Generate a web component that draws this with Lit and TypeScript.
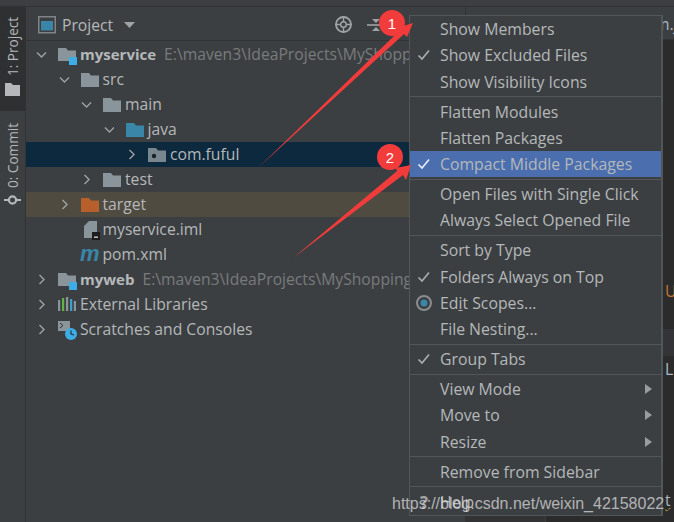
import { LitElement, html, css, svg } from "lit";
import { customElement } from "lit/decorators.js";

const folder = (c: string) => svg`<path d="M0 3h8l2 2.5h8V17H0z" fill="${c}"/>`;
const chev = (open: boolean) =>
  open
    ? html`<svg class="chev" width="12" height="12" viewBox="0 0 12 12"><path d="M1 3.5 5.5 8 10 3.5" fill="none" stroke="#9fa2a4" stroke-width="1.4"/></svg>`
    : html`<svg class="chev" width="12" height="12" viewBox="0 0 12 12"><path d="M3.5 1 8 5.5 3.5 10" fill="none" stroke="#9fa2a4" stroke-width="1.4"/></svg>`;

const moduleIcon = svg`<path d="M0 3h8l2 2.5h8V16H0z" fill="#8a949b"/><rect x="11" y="12" width="8" height="8" fill="#3dade6"/>`;

type Row = { d: number; chev?: "o" | "c"; icon: any; name: string; bold?: boolean; path?: string; cls?: string };
const rows: Row[] = [
  { d: 0, chev: "o", icon: moduleIcon, name: "myservice", bold: true, path: "E:\\maven3\\IdeaProjects\\MyShopping" },
  { d: 1, chev: "o", icon: folder("#8a949b"), name: "src" },
  { d: 2, chev: "o", icon: folder("#8a949b"), name: "main" },
  { d: 3, chev: "o", icon: folder("#3a86a8"), name: "java" },
  { d: 4, chev: "c", icon: svg`${folder("#7a868d")}<circle cx="6" cy="11" r="2.2" fill="#14222e"/>`, name: "com.fuful", cls: "sel" },
  { d: 2, chev: "c", icon: folder("#8a949b"), name: "test" },
  { d: 1, chev: "c", icon: folder("#b8602c"), name: "target", cls: "excl" },
  { d: 1, icon: svg`<path d="M8 1h8v17H3V6z" fill="#8a949b"/><rect x="11" y="12" width="8" height="8" fill="#1c1c1c"/><rect x="13" y="16.5" width="4" height="1.3" fill="#ddd"/>`, name: "myservice.iml" },
  { d: 1, icon: svg`<text x="-1" y="16" font-family="Liberation Sans" font-size="22" font-weight="700" font-style="italic" fill="#3a86a8">m</text>`, name: "pom.xml" },
  { d: 0, chev: "c", icon: moduleIcon, name: "myweb", bold: true, path: "E:\\maven3\\IdeaProjects\\MyShopping" },
  { d: 0, chev: "c", icon: svg`<rect x="0" y="5" width="2.2" height="11" fill="#8a949b"/><rect x="4" y="3" width="2.2" height="13" fill="#62b543"/><rect x="8" y="2" width="2.2" height="14" fill="#8a949b"/><rect x="12" y="4" width="2.2" height="12" fill="#3d9fd0"/><rect x="15.8" y="6" width="2.2" height="10" fill="#8a949b"/>`, name: "External Libraries" },
  { d: 0, chev: "c", icon: svg`<path d="M0 1h12v10H0z" fill="#8a949b"/><path d="M2 3l3 2.5L2 8" fill="none" stroke="#333" stroke-width="1"/><circle cx="13" cy="14" r="6" fill="#3dade6"/><path d="M13 10.5V14l3 1" fill="none" stroke="#24333c" stroke-width="1.2"/>`, name: "Scratches and Consoles" },
];

type Item = { t: string; check?: boolean; radio?: boolean; help?: boolean; arrow?: boolean; active?: boolean; h: number; u?: [string, string, string] };
const groups: Item[][] = [
  [{ t: "Show Members", h: 26 }, { t: "Show Excluded Files", check: true, h: 27 }, { t: "Show Visibility Icons", h: 26 }],
  [{ t: "Flatten Modules", h: 26 }, { t: "Flatten Packages", h: 26 }, { t: "Compact Middle Packages", check: true, active: true, h: 26 }],
  [{ t: "Open Files with Single Click", h: 26 }, { t: "Always Select Opened File", h: 26 }],
  [{ t: "Sort by Type", h: 27 }, { t: "Folders Always on Top", check: true, h: 26 }, { t: "Edit Scopes...", radio: true, h: 26, u: ["Ed", "i", "t Scopes..."] }, { t: "File Nesting...", h: 26 }],
  [{ t: "Group Tabs", check: true, h: 26 }],
  [{ t: "View Mode", arrow: true, h: 26 }, { t: "Move to", arrow: true, h: 27 }, { t: "Resize", arrow: true, h: 26 }],
  [{ t: "Remove from Sidebar", h: 26 }],
  [{ t: "Help", help: true, h: 26 }],
];

@customElement("app-root")
export class AppRoot extends LitElement {
  static styles = css`
    :host { display: block; width: 674px; height: 522px; position: relative; overflow: hidden; background: #3c3f41;
      font-family: "Open Sans", "Noto Sans", sans-serif; font-size: 15.7px; color: #b4b8ba; }
    * { box-sizing: border-box; }
    .top { height: 7px; border-bottom: 1px solid #323232; }
    .main { display: flex; height: 515px; }
    .stripe { width: 26px; flex: none; border-right: 1px solid #323232; display: flex; flex-direction: column; }
    .tab { writing-mode: vertical-rl; transform: rotate(180deg); display: flex; align-items: center; justify-content: flex-start;
      gap: 7px; font-size: 13.6px; color: #b4b8ba; width: 25px; }
    .tab.p { background: #2e3032; height: 104px; padding-top: 15px; }
    .tab.c { height: 96px; padding-top: 1px; gap: 6px; }
    .tab svg { transform: rotate(180deg); flex: none; }
    .side { width: 439px; flex: none; }
    .head { height: 34px; margin-bottom: 1px; padding-top: 2px; border-bottom: 1px solid #323232; display: flex; align-items: center; padding-left: 12px; gap: 6px; }
    .head .ic { flex: none; }
    .drop { margin-left: 5px; }
    .tool { display: flex; align-items: center; gap: 14px; position: absolute; left: 334px; }
    .r { height: 25px; display: flex; align-items: center; white-space: nowrap; overflow: hidden; }
    .r.sel { background: #0d293e; }
    .r.excl { background: #4f4b41; }
    .cw { width: 12px; flex: none; margin-right: 10px; display: flex; }
    .r svg.ico { flex: none; margin-right: 4px; overflow: visible; }
    .name { color: #b4b8ba; margin-bottom: 2px; }
    .name.b { font-weight: 700; font-size: 15px; }
    .path { color: #787b7d; margin-left: 8px; margin-bottom: 2px; }
    .editor { flex: 1; min-width: 0; display: flex; flex-direction: column; border-left: 1px solid #323232; }
    .etab { height: 33px; flex: none; border-bottom: 1px solid #323232; padding-left: 189px; padding-top: 2px; display: flex; align-items: center; color: #a9b7c6; white-space: nowrap; overflow: hidden; }
    .code { flex: 1; display: flex; background: #2b2b2b; min-height: 0; overflow: hidden; }
    .gutter { width: 80px; flex: none; background: #313335; border-right: 1px solid #3c3f41; }
    .lines { flex: 1; min-width: 0; padding-left: 119px; padding-top: 241px; white-space: nowrap; }
    .ln { height: 20px; line-height: 20px; }
    .uu { color: #c57633; }
    .band { height: 27px; margin: 28px 0 3px -119px; background: #323436; }
    .ll { color: #a9b7c6; }
    .tt { color: #a9b7c6; margin-top: 111px; text-decoration: underline wavy #a89a4a; text-decoration-thickness: 1px; }
    .menu { position: absolute; left: 409px; top: 15px; width: 254px; height: 501px; background: #3c3f41; border: 1px solid #515658; border-right-width: 2px; font-size: 15.8px; }
    .mi { display: flex; align-items: center; padding-left: 30px; padding-right: 9px; color: #b4b8ba; }
    .mi.act { background: #4b6eaf; }
    .mi.tall { padding-bottom: 1px; }
    .mi .lead { position: absolute; left: 3px; width: 22px; display: flex; justify-content: center; }
    .sep { height: 1px; background: #515658; margin: 2px 0 1px; }
    .sep.a { margin: 1px 0 2px; }
    .arr { margin-left: auto; width: 0; height: 0; border-left: 7px solid #9a9d9f; border-top: 5px solid transparent; border-bottom: 5px solid transparent; }
    .u { text-decoration: underline; }
    .help { font-size: 17px; font-weight: 700; color: #a0a3a5; }
    .over { position: absolute; left: 0; top: 0; pointer-events: none; }
    .wm { position: absolute; left: 392px; top: 495px; font-family: "Liberation Sans", sans-serif; font-size: 16px; color: rgba(225,225,225,.72); white-space: nowrap; }
  `;

  private lead(i: Item) {
    if (i.check)
      return html`<span class="lead"><svg width="16" height="14" viewBox="0 0 16 14"><path d="M2.5 7.5 6 11 13 2.5" fill="none" stroke="${i.active ? "#e8ecf2" : "#a9acae"}" stroke-width="1.7"/></svg></span>`;
    if (i.radio)
      return html`<span class="lead"><svg width="18" height="18" viewBox="0 0 18 18"><circle cx="9" cy="9" r="7" fill="none" stroke="#8a8e91" stroke-width="2"/><circle cx="9" cy="9" r="3.5" fill="#3a86a8"/></svg></span>`;
    if (i.help) return html`<span class="lead help">?</span>`;
    return "";
  }

  render() {
    return html`
      <div class="top"></div>
      <div class="main">
        <div class="stripe">
          <div class="tab p"><svg width="15" height="13" viewBox="0 0 15 13"><path d="M0 0h6l2 2h7v11H0z" fill="#b4b8ba"/></svg><span>1: Project</span></div>
          <div class="tab c"><svg width="17" height="12" viewBox="0 0 17 12"><circle cx="8.5" cy="6" r="3.6" fill="none" stroke="#b4b8ba" stroke-width="2.2"/><path d="M0 6h5M12 6h5" stroke="#b4b8ba" stroke-width="2"/></svg><span>0: Commit</span></div>
        </div>
        <div class="side">
          <div class="head">
            <svg class="ic" width="18" height="18" viewBox="0 0 18 18"><rect x=".75" y=".75" width="16.5" height="16" fill="none" stroke="#808487" stroke-width="1.5"/><rect x="3" y="5" width="12" height="9.5" fill="#3a86a8"/></svg>
            <span>Project</span>
            <svg class="drop" width="11" height="6" viewBox="0 0 11 6"><path d="M0 0h11L5.5 6z" fill="#a0a3a5"/></svg>
            <div class="tool">
              <svg width="19" height="19" viewBox="0 0 19 19"><circle cx="9.5" cy="9.5" r="7.5" fill="none" stroke="#a0a3a5" stroke-width="1.8"/><circle cx="9.5" cy="9.5" r="2.8" fill="none" stroke="#a0a3a5" stroke-width="1.4"/><path d="M9.5 1v6M9.5 12v6M1 9.5h6M12 9.5h6" stroke="#a0a3a5" stroke-width="1.4"/></svg>
              <svg width="18" height="16" viewBox="0 0 18 16"><path d="M0 8h18" stroke="#a0a3a5" stroke-width="1.6"/><path d="M5 2h8L9 6zM5 14h8l-4-4z" fill="#a0a3a5"/></svg>
            </div>
          </div>
          ${rows.map(
            (r) => html`<div class="r ${r.cls ?? ""}" style="padding-left:${10 + r.d * 22.5}px">
              <span class="cw">${r.chev ? chev(r.chev === "o") : ""}</span>
              <svg class="ico" width="18" height="19" viewBox="0 0 18 19">${r.icon}</svg>
              <span class="name ${r.bold ? "b" : ""}">${r.name}</span>
              ${r.path ? html`<span class="path">${r.path}</span>` : ""}
            </div>`
          )}
        </div>
        <div class="editor">
          <div class="etab">m.java</div>
          <div class="code">
            <div class="gutter"></div>
            <div class="lines">
              <div class="ln uu">U</div>
              <div class="band"></div>
              <div class="ln ll">L</div>
              <div class="ln tt">t</div>
            </div>
          </div>
        </div>
      </div>
      <div class="menu">
        ${groups.map(
          (g, gi) => html`${gi ? html`<div class="sep ${gi === 1 || gi >= 6 ? "a" : ""}"></div>` : ""}${g.map(
            (i) => html`<div class="mi ${i.active ? "act" : ""} ${i.h > 26 ? "tall" : ""}" style="height:${i.h}px">
              ${this.lead(i)}
              <span>${i.u ? html`${i.u[0]}<span class="u">${i.u[1]}</span>${i.u[2]}` : i.t}</span>
              ${i.arrow ? html`<span class="arr"></span>` : ""}
            </div>`
          )}`
        )}
      </div>
      <svg class="over" width="674" height="522" viewBox="0 0 674 522">
        <path d="M258 168 L394 36 L390 30 L413 23 L407 37 L404 34 Z" fill="#f23c3c"/>
        <path d="M293 258 L397 171 L396 168 L411 165 L406 180 L403 175 Z" fill="#f23c3c"/>
        <circle cx="392" cy="23" r="13" fill="#f23c3c"/>
        <circle cx="390" cy="157" r="13" fill="#f23c3c"/>
        <text x="392" y="28.5" text-anchor="middle" font-family="Liberation Sans" font-size="15" fill="#fff">1</text>
        <text x="390" y="162.5" text-anchor="middle" font-family="Liberation Sans" font-size="15" fill="#fff">2</text>
      </svg>
      <div class="wm">https://blog.csdn.net/weixin_42158022</div>
    `;
  }
}
